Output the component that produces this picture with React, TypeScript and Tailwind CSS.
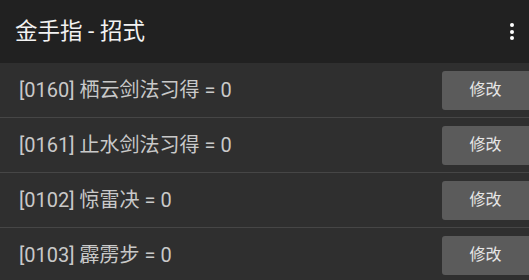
const rows = [
  { code: '0160', name: '栖云剑法习得', value: 0 },
  { code: '0161', name: '止水剑法习得', value: 0 },
  { code: '0102', name: '惊雷决', value: 0 },
  { code: '0103', name: '霹雳步', value: 0 },
]

export default function App() {
  return (
    <div
      className="w-[529px] h-[280px] overflow-hidden bg-[#2f2f2f]"
      style={{ fontFamily: "Roboto, 'Noto Sans CJK SC', sans-serif" }}
    >
      {/* Toolbar */}
      <header className="h-[63px] bg-[#212121] flex items-center justify-between pl-[15px] pr-[11px]">
        <h1 className="text-[22.5px] text-[#f2f2f2] leading-none">金手指 - 招式</h1>
        <button className="flex flex-col items-center gap-[2.5px] px-1" aria-label="More">
          <span className="w-[4px] h-[4px] rounded-full bg-white" />
          <span className="w-[4px] h-[4px] rounded-full bg-white" />
          <span className="w-[4px] h-[4px] rounded-full bg-white" />
        </button>
      </header>

      {/* List */}
      <ul>
        {rows.map((r) => (
          <li
            key={r.code}
            className="h-[55px] flex items-center border-b border-[#464646] pl-[19px] overflow-hidden"
          >
            <span className="text-[20px] text-[#c9c9c9] leading-none">
              [{r.code}] {r.name} = {r.value}
            </span>
            <button className="ml-auto mr-[-4px] w-[91px] h-[39px] shrink-0 rounded-[3px] bg-[#5b5b5b] text-[16px] text-[#e6e6e6] pr-[4px]">
              修改
            </button>
          </li>
        ))}
      </ul>
    </div>
  )
}
